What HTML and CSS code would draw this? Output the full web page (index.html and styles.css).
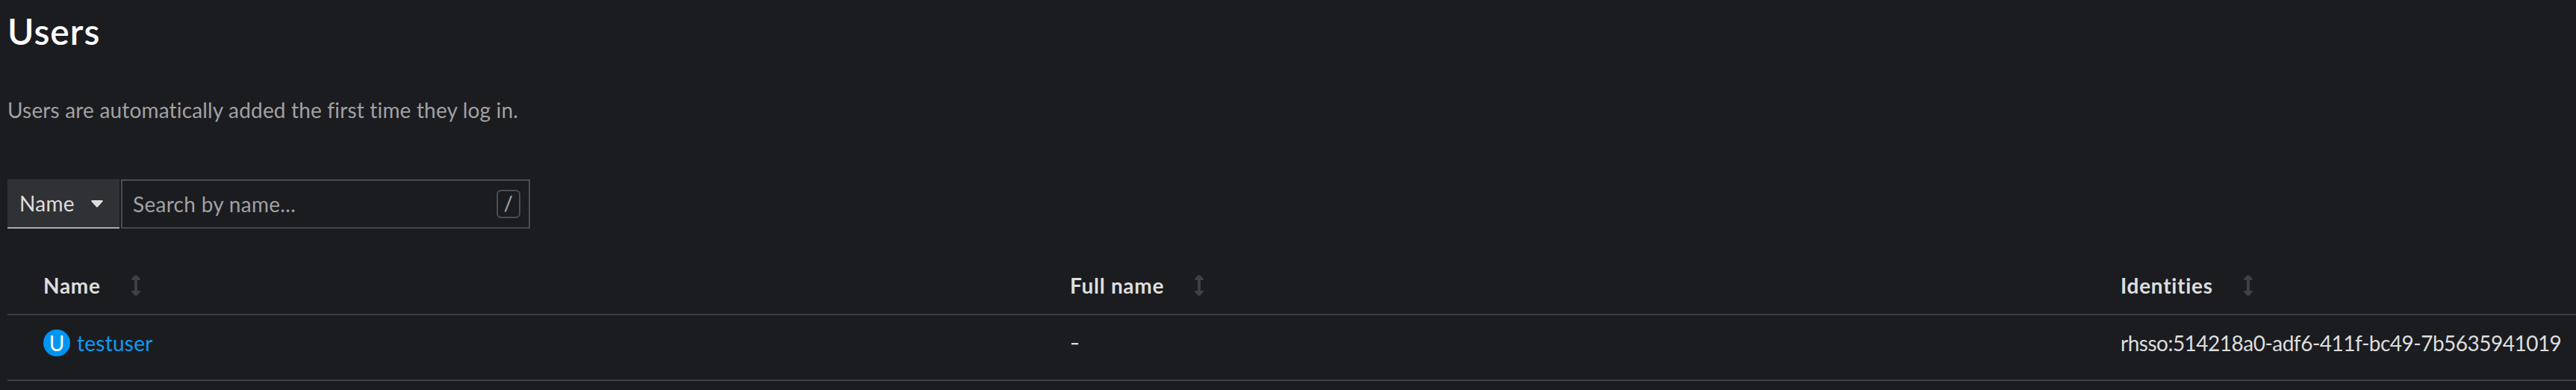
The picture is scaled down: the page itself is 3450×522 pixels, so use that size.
FILE: index.html
```html
<!DOCTYPE html>
<html lang="en">
<head>
<meta charset="utf-8">
<title>Users</title>
<link rel="stylesheet" href="styles.css">
</head>
<body>
<main class="page">
  <h1 class="title">Users</h1>
  <p class="description">Users are automatically added the first time they log in.</p>
  <div class="toolbar">
    <button class="filter" type="button">
      <span class="t-filter">Name</span>
      <svg class="caret" viewBox="0 0 16 10"><path d="M1.200 0h13.600q1.600.5.6 1.800L9 9q-1 .9-2 0L.6 1.800Q-.4.5 1.200 0z"/></svg>
    </button>
    <div class="search">
      <span class="t-placeholder">Search by name...</span>
      <kbd class="shortcut"><span class="slash">/</span></kbd>
    </div>
  </div>
  <div class="table">
    <div class="row head">
      <div class="cell"><span class="t-name">Name</span><svg class="sort" viewBox="0 0 12 28"><path d="M6 0Q7 0 8 1l3.600 4q1 2-.8 2H8v14h2.800q1.800 0 .8 2L8 27q-2 2-4 0L.4 23q-1-2 .8-2H4V7H1.200q-1.800 0-.8-2L4 1q1-1 2-1z"/></svg></div>
      <div class="cell"><span class="t-full">Full name</span><svg class="sort" viewBox="0 0 12 28"><path d="M6 0Q7 0 8 1l3.600 4q1 2-.8 2H8v14h2.800q1.800 0 .8 2L8 27q-2 2-4 0L.4 23q-1-2 .8-2H4V7H1.200q-1.800 0-.8-2L4 1q1-1 2-1z"/></svg></div>
      <div class="cell"><span class="t-identities">Identities</span><svg class="sort" viewBox="0 0 12 28"><path d="M6 0Q7 0 8 1l3.600 4q1 2-.8 2H8v14h2.800q1.800 0 .8 2L8 27q-2 2-4 0L.4 23q-1-2 .8-2H4V7H1.200q-1.800 0-.8-2L4 1q1-1 2-1z"/></svg></div>
    </div>
    <div class="row body">
      <div class="cell"><span class="badge">U</span><a class="link">testuser</a></div>
      <div class="cell"><span class="dash">-</span></div>
      <div class="cell"><span class="t-identity">rhsso:514218a0-adf6-411f-bc49-7b5635941019</span></div>
    </div>
  </div>
</main>
</body>
</html>
```
FILE: styles.css
```css
* { box-sizing: border-box; }
body {
  margin: 0;
  background: #1b1c20;
  color: #dedede;
  font: 28px/40px Lato, sans-serif;
  font-kerning: normal;
  font-variant-ligatures: none;
  overflow: hidden;
}
.page { padding: 12px 0 0 10px; height: 522px; }
.title { margin: 0; height: 60px; font-size: 48px; line-height: 60px; font-weight: 600; letter-spacing: 1px; color: #fff; }
.description { margin: 0; padding-top: 55px; height: 168px; letter-spacing: 0.17px; color: #a1a1a2; }
.toolbar { display: flex; gap: 2px; height: 66px; }
.filter {
  display: flex; align-items: center; justify-content: space-between;
  width: 150px; padding: 0 22px 0 16px; border: 0; border-bottom: 2px solid #a9aaad;
  background: #303134; color: #dedede; font: inherit;
}
.t-filter { letter-spacing: 0.3px; }
.caret { width: 16px; height: 10px; margin-top: 2px; fill: #dedede; }
.search {
  display: flex; align-items: center; justify-content: space-between;
  width: 548px; padding: 0 11px 0 14px; border: 2px solid #4c4d50; border-bottom-color: #434447; color: #a1a1a2;
}
.t-placeholder { letter-spacing: 0.3px; }
.shortcut {
  display: flex; align-items: center; justify-content: center;
  width: 32px; height: 38px; border: 2px solid #4c4d50; border-radius: 6px; font: inherit;
}
.slash { font-family: Roboto, sans-serif; }
.table { margin-top: 36px; }
.row { display: grid; grid-template-columns: 1376px 1407px 1fr; padding-left: 48px; align-items: center; border-bottom: 2px solid #3d3e41; }
.head { height: 80px; padding-top: 2px; font-weight: 700; letter-spacing: 0.7px; }
.body { height: 88px; padding-bottom: 12px; }
.head .cell, .body .cell { display: flex; align-items: center; white-space: nowrap; }
.sort { width: 12px; height: 28px; fill: #3f4043; margin-left: 41px; }
.badge {
  display: flex; align-items: center; justify-content: center;
  width: 36px; height: 36px; margin-right: 9px; border-radius: 50%; background: #0095f3; color: #fff;
}
.link { color: #0d9bf3; letter-spacing: 0.25px; }
.t-identity, .t-full, .t-identities, .dash { margin-left: -1px; }
.t-identity { letter-spacing: -0.51px; }
.dash { font-family: Inter, sans-serif; }
```
